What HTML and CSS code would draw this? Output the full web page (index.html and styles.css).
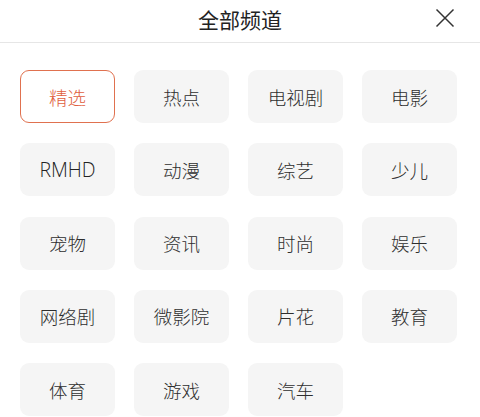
FILE: index.html
```html
<!DOCTYPE html>
<html lang="zh">
<head>
<meta charset="utf-8">
<link rel="stylesheet" href="styles.css">
</head>
<body>
<div class="header">
  <div class="title">全部频道</div>
  <div class="close">
    <svg width="20" height="20" viewBox="0 0 20 20"><path d="M1.5 1.5 L18.5 18.5 M18.5 1.5 L1.5 18.5" stroke="#333" stroke-width="1.5" fill="none"/></svg>
  </div>
</div>
<div class="grid">
  <div class="pill active">精选</div>
  <div class="pill">热点</div>
  <div class="pill">电视剧</div>
  <div class="pill">电影</div>
  <div class="pill latin">RMHD</div>
  <div class="pill">动漫</div>
  <div class="pill">综艺</div>
  <div class="pill">少儿</div>
  <div class="pill">宠物</div>
  <div class="pill">资讯</div>
  <div class="pill">时尚</div>
  <div class="pill">娱乐</div>
  <div class="pill">网络剧</div>
  <div class="pill">微影院</div>
  <div class="pill">片花</div>
  <div class="pill">教育</div>
  <div class="pill">体育</div>
  <div class="pill">游戏</div>
  <div class="pill">汽车</div>
</div>
</body>
</html>
```
FILE: styles.css
```css
html, body {
  margin: 0;
  padding: 0;
  background: #fff;
  font-family: "Open Sans", "Noto Sans CJK SC", sans-serif;
  color: #333;
}
.header {
  position: relative;
  height: 42px;
  border-bottom: 1px solid #e6e6e6;
  display: flex;
  align-items: center;
  justify-content: center;
}
.title {
  font-size: 21px;
  color: #222;
  font-family: "Noto Sans CJK SC", sans-serif;
  line-height: 1;
  margin-top: -3px;
}
.close {
  position: absolute;
  right: 25px;
  top: 8px;
  width: 20px;
  height: 20px;
}
.close svg { display: block; }
.grid {
  display: grid;
  grid-template-columns: repeat(4, 95px);
  grid-auto-rows: 53px;
  column-gap: 19px;
  row-gap: 20.3px;
  padding: 27px 0 0 20px;
}
.pill {
  background: #f5f5f5;
  border-radius: 9px;
  display: flex;
  align-items: center;
  justify-content: center;
  font-size: 18.5px;
  font-weight: 300;
  color: #2e2e2e;
  box-sizing: border-box;
}
.latin {
  font-size: 19.5px;
  font-weight: 300;
  color: #222;
}
.active {
  background: #fff;
  border: 1.5px solid #e0714f;
  color: #e0603e;
}
```
